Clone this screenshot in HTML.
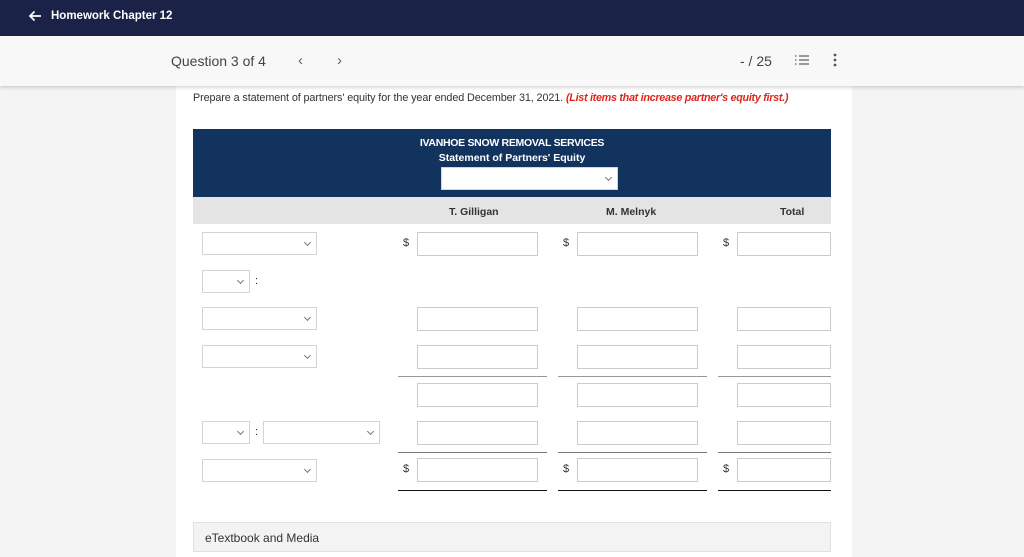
<!DOCTYPE html>
<html><head><style>
*{box-sizing:border-box;margin:0;padding:0}
body{width:1024px;height:557px;overflow:hidden;background:#f4f4f4;font-family:"Liberation Sans",sans-serif;position:relative}
.top{position:absolute;left:0;top:0;width:1024px;height:36px;background:#1a2248;color:#fff;font-size:11.5px;font-weight:bold}
.hdr{position:absolute;left:0;top:36px;width:1024px;height:50px;background:#f8f8f8;box-shadow:0 2px 3px rgba(0,0,0,.15);z-index:2}
.main{position:absolute;left:176px;top:86px;width:676px;height:471px;background:#fff}
.a{position:absolute}
.sel{position:absolute;height:23px;border:1px solid #d4d4d4;background:#fff}
.sel:after{content:"";position:absolute;right:6px;top:7px;width:4px;height:4px;border-right:1px solid #777;border-bottom:1px solid #777;transform:rotate(45deg)}
.inp{position:absolute;height:24px;border:1px solid #ccc;background:#fff}
.d{position:absolute;font-size:11px;color:#333}
.ln{position:absolute;height:1px}
</style></head><body>
<div class="top"><svg class="a" style="left:28px;top:10px" width="14" height="12"><path d="M13 6H2M6.5 1.5L2 6l4.5 4.5" stroke="#fff" stroke-width="1.8" fill="none"/></svg><span class="a" style="left:51px;top:10px">Homework Chapter 12</span></div>
<div class="hdr">
<span class="a" style="left:171px;top:17px;font-size:14px;color:#444">Question 3 of 4</span>
<span class="a" style="left:298px;top:16px;font-size:15px;color:#666">&lsaquo;</span>
<span class="a" style="left:337px;top:16px;font-size:15px;color:#666">&rsaquo;</span>
<span class="a" style="left:740px;top:17px;font-size:14px;color:#444">- / 25</span>
<svg class="a" style="left:794px;top:18px" width="16" height="12"><g stroke="#666" stroke-width="1.3"><line x1="5" y1="2" x2="15" y2="2"/><line x1="5" y1="6" x2="15" y2="6"/><line x1="5" y1="10" x2="15" y2="10"/><line x1="1" y1="2" x2="2.5" y2="2"/><line x1="1" y1="6" x2="2.5" y2="6"/><line x1="1" y1="10" x2="2.5" y2="10"/></g></svg>
<svg class="a" style="left:833px;top:17px" width="4" height="14"><circle cx="2" cy="2" r="1.4" fill="#555"/><circle cx="2" cy="7" r="1.4" fill="#555"/><circle cx="2" cy="12" r="1.4" fill="#555"/></svg>
</div>
<div class="main"></div>
<div class="a" style="left:193px;top:92px;font-size:10.8px;color:#333;white-space:nowrap;letter-spacing:-.1px">Prepare a statement of partners' equity for the year ended December 31, 2021. <i style="color:#e0261c;font-weight:bold;letter-spacing:-.3px">(List items that increase partner's equity first.)</i></div>
<div class="a" style="left:193px;top:129px;width:638px;height:68px;background:#13335f;color:#fff;text-align:center;font-size:10.5px;font-weight:bold">
<div style="margin-top:8px;letter-spacing:-.3px">IVANHOE SNOW REMOVAL SERVICES</div><div style="margin-top:3px">Statement of Partners' Equity</div></div>
<div class="sel" style="left:441px;top:167px;width:177px;"></div>
<div class="a" style="left:193px;top:197px;width:638px;height:27px;background:#e4e4e4;font-size:10.5px;font-weight:bold;color:#333">
<span class="a" style="left:256px;top:9px">T. Gilligan</span><span class="a" style="left:413px;top:9px">M. Melnyk</span><span class="a" style="left:587px;top:9px">Total</span></div>
<div class="sel" style="left:202px;top:232px;width:115px"></div>
<div class="sel" style="left:202px;top:270px;width:48px"></div><span class="d" style="left:255px;top:275px">:</span>
<div class="sel" style="left:202px;top:307px;width:115px"></div>
<div class="sel" style="left:202px;top:345px;width:115px"></div>
<div class="sel" style="left:202px;top:421px;width:48px"></div><span class="d" style="left:255px;top:426px">:</span>
<div class="sel" style="left:263px;top:421px;width:117px"></div>
<div class="sel" style="left:202px;top:459px;width:115px"></div>
<div class="d" style="left:403px;top:237px">$</div><div class="d" style="left:563px;top:237px">$</div><div class="d" style="left:723px;top:237px">$</div>
<div class="d" style="left:403px;top:463px">$</div><div class="d" style="left:563px;top:463px">$</div><div class="d" style="left:723px;top:463px">$</div>
<div class="inp" style="left:417px;top:232px;width:121px"></div><div class="inp" style="left:577px;top:232px;width:121px"></div><div class="inp" style="left:737px;top:232px;width:94px"></div>
<div class="inp" style="left:417px;top:307px;width:121px"></div><div class="inp" style="left:577px;top:307px;width:121px"></div><div class="inp" style="left:737px;top:307px;width:94px"></div>
<div class="inp" style="left:417px;top:345px;width:121px"></div><div class="inp" style="left:577px;top:345px;width:121px"></div><div class="inp" style="left:737px;top:345px;width:94px"></div>
<div class="ln" style="left:398px;top:376px;width:149px;background:#999"></div><div class="ln" style="left:558px;top:376px;width:149px;background:#999"></div><div class="ln" style="left:718px;top:376px;width:113px;background:#999"></div>
<div class="inp" style="left:417px;top:383px;width:121px"></div><div class="inp" style="left:577px;top:383px;width:121px"></div><div class="inp" style="left:737px;top:383px;width:94px"></div>
<div class="inp" style="left:417px;top:421px;width:121px"></div><div class="inp" style="left:577px;top:421px;width:121px"></div><div class="inp" style="left:737px;top:421px;width:94px"></div>
<div class="ln" style="left:398px;top:452px;width:149px;background:#777"></div><div class="ln" style="left:558px;top:452px;width:149px;background:#777"></div><div class="ln" style="left:718px;top:452px;width:113px;background:#777"></div>
<div class="inp" style="left:417px;top:458px;width:121px"></div><div class="inp" style="left:577px;top:458px;width:121px"></div><div class="inp" style="left:737px;top:458px;width:94px"></div>
<div class="ln" style="left:398px;top:490px;width:149px;background:#111"></div><div class="ln" style="left:558px;top:490px;width:149px;background:#111"></div><div class="ln" style="left:718px;top:490px;width:113px;background:#111"></div>
<div class="a" style="left:193px;top:522px;width:638px;height:30px;background:#f3f3f3;border:1px solid #e2e2e2;font-size:12px;color:#333;padding:8px 0 0 11px">eTextbook and Media</div>
</body></html>
